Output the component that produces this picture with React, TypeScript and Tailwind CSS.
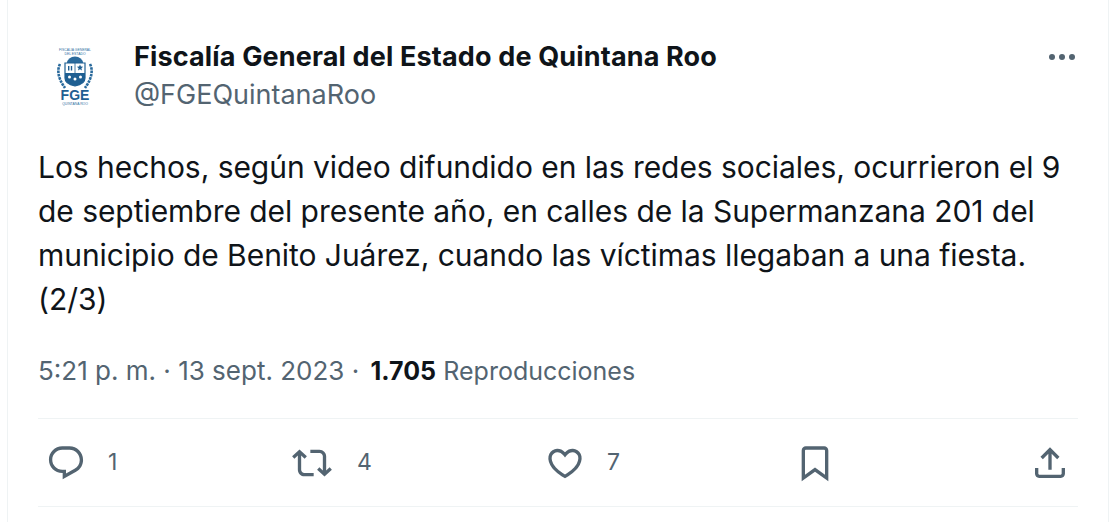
const icons = {
  reply: 'M1.751 10c0-4.42 3.584-8 8.005-8h4.366c4.49 0 8.129 3.64 8.129 8.13 0 2.96-1.607 5.68-4.196 7.11l-8.054 4.46v-3.69h-.067c-4.49.1-8.183-3.51-8.183-8.01zm8.005-6c-3.317 0-6.005 2.69-6.005 6 0 3.37 2.77 6.08 6.138 6.01l.351-.01h1.761v2.3l5.087-2.81c1.951-1.08 3.163-3.13 3.163-5.36 0-3.39-2.744-6.13-6.129-6.13H9.756z',
  retweet: 'M4.5 3.88l4.432 4.14-1.364 1.46L5.5 7.55V16c0 1.1.896 2 2 2H13v2H7.5c-2.209 0-4-1.79-4-4V7.55L1.432 9.48.068 8.02 4.5 3.88zM16.5 6H11V4h5.5c2.209 0 4 1.79 4 4v8.45l2.068-1.93 1.364 1.46-4.432 4.14-4.432-4.14 1.364-1.46 2.068 1.93V8c0-1.1-.896-2-2-2z',
  like: 'M16.697 5.5c-1.222-.06-2.679.51-3.89 2.16l-.805 1.09-.806-1.09C9.984 6.01 8.526 5.44 7.304 5.5c-1.243.07-2.349.78-2.91 1.91-.552 1.12-.633 2.78.479 4.82 1.074 1.97 3.257 4.27 7.129 6.61 3.87-2.34 6.052-4.64 7.126-6.61 1.111-2.04 1.03-3.7.477-4.82-.561-1.13-1.666-1.84-2.908-1.91zm4.187 7.69c-1.351 2.48-4.001 5.12-8.379 7.67l-.503.3-.504-.3c-4.379-2.55-7.029-5.19-8.382-7.67-1.36-2.5-1.41-4.86-.514-6.67.887-1.79 2.647-2.91 4.601-3.01 1.651-.09 3.368.56 4.798 2.01 1.429-1.45 3.146-2.1 4.796-2.01 1.954.1 3.714 1.22 4.601 3.01.896 1.81.846 4.17-.514 6.67z',
  bookmark: 'M4 4.5C4 3.12 5.119 2 6.5 2h11C18.881 2 20 3.12 20 4.5v18.44l-8-5.71-8 5.71V4.5zM6.5 4c-.276 0-.5.22-.5.5v14.56l6-4.29 6 4.29V4.5c0-.28-.224-.5-.5-.5h-11z',
  share: 'M12 2.59l5.7 5.7-1.41 1.42L13 6.41V16h-2V6.41l-3.3 3.3-1.41-1.42L12 2.59zM21 15l-.02 3.51c0 1.38-1.12 2.49-2.5 2.49H5.5C4.11 21 3 19.88 3 18.5V15h2v3.5c0 .28.22.5.5.5h12.98c.28 0 .5-.22.5-.5L19 15h2z',
};

function ActionIcon({ d }: { d: string }) {
  return (
    <svg viewBox="0 0 24 24" className="h-10 w-10 shrink-0 fill-[#536471]">
      <path d={d} />
    </svg>
  );
}

function Logo() {
  return (
    <svg viewBox="0 0 60 60" className="h-[60px] w-[60px]">
      <text x="30" y="5" textAnchor="middle" fontSize="3.4" fill="#2f6f9f" fontFamily="Liberation Sans, sans-serif">FISCALÍA GENERAL</text>
      <text x="30" y="9" textAnchor="middle" fontSize="3.4" fill="#2f6f9f" fontFamily="Liberation Sans, sans-serif">DEL ESTADO</text>
      <path d="M22 17a8 6.5 0 0 1 16 0z" fill="#2a6a9c" />
      <path d="M20 17h20v15q0 6-10 8-10-2-10-8z" fill="#fff" stroke="#1f5f92" strokeWidth="1.2" />
      <path d="M20 27h20v5q0 6-10 8-10-2-10-8z" fill="#1f5f92" />
      <path d="M30 17v10" stroke="#1f5f92" strokeWidth="0.8" />
      <path d="M35 18.5l.9 2.1 2.2.2-1.7 1.4.6 2.2-2-1.2-2 1.2.6-2.2-1.7-1.4 2.2-.2z" fill="#1f5f92" />
      <path d="M23 20h1.4v4.5H23zM25.8 20h1.4v4.5h-1.4z" fill="#1f5f92" />
      <circle cx="24.5" cy="31" r="1.5" fill="#fff" />
      <circle cx="30" cy="33" r="1.5" fill="#fff" />
      <circle cx="35.5" cy="31" r="1.5" fill="#fff" />
      <path d="M15 18q-5 10 5 24M45 18q5 10-5 24" fill="none" stroke="#2a6a9c" strokeWidth="2.6" strokeDasharray="2.6 .8" />
      <text x="30" y="53.5" textAnchor="middle" fontSize="14" fontWeight="700" fill="#1f5f92" fontFamily="Liberation Sans, sans-serif">FGE</text>
      <text x="30" y="59" textAnchor="middle" fontSize="3.4" fill="#2f6f9f" fontFamily="Liberation Sans, sans-serif">QUINTANA ROO</text>
    </svg>
  );
}

export default function App() {
  return (
    <div className="h-[522px] w-[1120px] overflow-hidden bg-white font-['Inter',sans-serif]">
      <div className="ml-[7px] h-full w-[1102px] border-x border-[#eff3f4] px-[30px] pt-[38px]">
        <header className="flex items-start">
          <div className="ml-[7px] flex h-[76px] w-[60px] shrink-0 items-center"><Logo /></div>
          <div className="ml-[29px] min-w-0 flex-1">
            <p className="text-[27px] font-bold leading-[38px] tracking-[0.15px] text-[#0f1419]">Fiscalía General del Estado de Quintana Roo</p>
            <p className="text-[27px] leading-[38px] text-[#536471]">@FGEQuintanaRoo</p>
          </div>
          <div className="mr-[3px] mt-[16px] flex gap-[4px]">
            <span className="h-[6px] w-[6px] rounded-full bg-[#536471]" />
            <span className="h-[6px] w-[6px] rounded-full bg-[#536471]" />
            <span className="h-[6px] w-[6px] rounded-full bg-[#536471]" />
          </div>
        </header>
        <p className="mt-[31px] text-[30px] leading-[44px] tracking-[-0.05px] text-[#0f1419]">
          Los hechos, según video difundido en las redes sociales, ocurrieron el 9<br />
          de septiembre del presente año, en calles de la Supermanzana 201 del<br />
          municipio de Benito Juárez, cuando las víctimas llegaban a una fiesta.<br />
          (2/3)
        </p>
        <p className="mt-[31px] text-[26px] leading-[38px] text-[#536471]">
          5:21 p. m. · 13 sept. 2023 ·{' '}
          <span className="ml-[4px] text-[25px] font-bold text-[#0f1419]">1.705</span>{' '}
          <span className="text-[25px]">Reproducciones</span>
        </p>
        <div className="mt-[28px] flex h-[89px] w-[1040px] items-center border-y border-[#eff3f4] pl-[8px] pr-[8px] text-[23px] text-[#536471]">
          <div className="flex w-[246px] items-center gap-[22px]"><ActionIcon d={icons.reply} /><span>1</span></div>
          <div className="flex w-[253px] items-center gap-[25px]"><ActionIcon d={icons.retweet} /><span>4</span></div>
          <div className="flex w-[250px] items-center gap-[22px]"><ActionIcon d={icons.like} /><span>7</span></div>
          <div className="w-[235px]"><ActionIcon d={icons.bookmark} /></div>
          <ActionIcon d={icons.share} />
        </div>
      </div>
    </div>
  );
}
